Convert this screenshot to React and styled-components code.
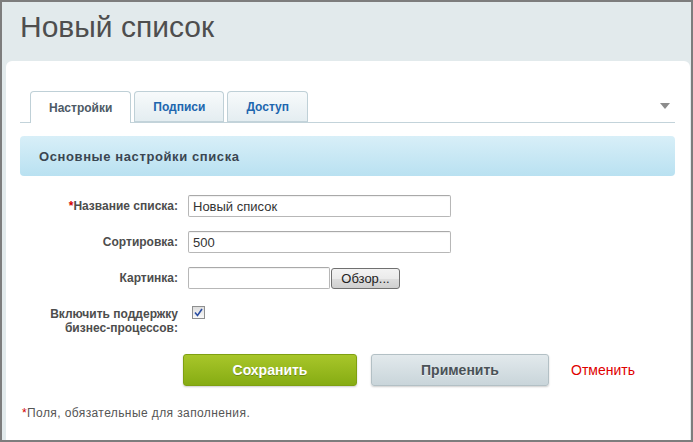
import React from 'react';
import styled, { createGlobalStyle } from 'styled-components';

const GlobalStyle = createGlobalStyle`
    html, body {
        margin: 0;
        padding: 0;
    }
    body {
        font-family: "Liberation Sans", Arial, sans-serif;
    }
`

const Frame = styled.div`
    width: 693px;
    height: 442px;
    box-sizing: border-box;
    border: 2px solid #7d7d7d;
    background: #e2eaec;
    display: flex;
    flex-direction: column;
    overflow: hidden;
`

const TitleBar = styled.div`
    height: 59px;
    padding-left: 18px;
    box-sizing: border-box;
`

const Title = styled.h1`
    margin: 0;
    padding-top: 8px;
    font-size: 30px;
    line-height: 34px;
    font-weight: normal;
    color: #4e4e4e;
`

const Panel = styled.div`
    flex: 1;
    background: #fff;
    margin: 0 1px 0 4px;
    border-radius: 6px 6px 0 0;
    padding: 29px 15px 0 14px;
`

const TabsRow = styled.div`
    display: flex;
    align-items: flex-end;
    gap: 3px;
    padding-left: 10px;
    height: 32px;
    border-bottom: 1px solid #c3d3da;
`

const Tab = styled.div`
    height: ${p => (p.$active ? '32px' : '31px')};
    margin-bottom: ${p => (p.$active ? '-1px' : '0')};
    padding: 0 18px;
    box-sizing: border-box;
    display: flex;
    align-items: center;
    border: 1px solid #bfd0d7;
    border-bottom: ${p => (p.$active ? 'none' : '1px solid #c3d3da')};
    border-radius: 4px 4px 0 0;
    background: ${p => (p.$active ? '#fff' : 'linear-gradient(#f7fafb, #e4edf1)')};
    font-size: 12px;
    font-weight: bold;
    color: ${p => (p.$active ? '#4d5a66' : '#2066ae')};
`

const TabArrow = styled.div`
    margin-left: auto;
    margin-right: 5px;
    align-self: center;
    width: 0;
    height: 0;
    border-left: 5px solid transparent;
    border-right: 5px solid transparent;
    border-top: 6px solid #8c8c8c;
`

const SectionHeader = styled.div`
    margin-top: 13px;
    height: 40px;
    box-sizing: border-box;
    padding-left: 19px;
    display: flex;
    align-items: center;
    border-radius: 4px;
    background: linear-gradient(#d8eff8, #b9e1f1);
    font-size: 13px;
    font-weight: bold;
    color: #3a4651;
    letter-spacing: 0.6px;
`

const Form = styled.div`
    margin-top: 19px;
    display: grid;
    grid-template-columns: 158px 1fr;
    column-gap: 10px;
    row-gap: 14px;
    align-items: center;
`

const Label = styled.div`
    text-align: right;
    font-size: 12px;
    font-weight: bold;
    line-height: 14px;
    color: #4d4d4d;
    align-self: ${p => (p.$top ? 'start' : 'center')};
    padding-top: ${p => (p.$top ? '4px' : '0')};
`

const Req = styled.span`
    color: #d40000;
`

const TextInput = styled.input`
    width: ${p => p.$w || 263}px;
    height: 22px;
    box-sizing: border-box;
    border: 1px solid #b7b7b7;
    border-top-color: #a9a9a9;
    border-radius: 2px;
    padding: 0 4px;
    font-family: "Liberation Sans", Arial, sans-serif;
    font-size: 13px;
    color: #333;
    box-shadow: inset 0 1px 1px rgba(0, 0, 0, 0.06);
    outline: none;
`

const FileRow = styled.div`
    display: flex;
    align-items: center;
    gap: 1px;
`

const BrowseButton = styled.div`
    width: 69px;
    height: 21px;
    box-sizing: border-box;
    display: flex;
    align-items: center;
    justify-content: center;
    border: 1px solid #707070;
    border-radius: 3px;
    background: linear-gradient(#f3f3f3 0%, #ebebeb 50%, #dddddd 51%, #cfcfcf 100%);
    font-size: 13px;
    color: #222;
`

const CheckCell = styled.div`
    align-self: start;
    padding: 3px 0 0 4px;
`

const CheckBox = styled.span`
    display: flex;
    align-items: center;
    justify-content: center;
    width: 13px;
    height: 13px;
    box-sizing: border-box;
    border: 1px solid #8e8f8f;
    background: linear-gradient(#dedede, #f9f9f9);
`

const Actions = styled.div`
    margin: 19px 0 0 163px;
    display: flex;
    align-items: center;
`

const Button = styled.div`
    width: ${p => p.$w}px;
    height: 32px;
    box-sizing: border-box;
    display: flex;
    align-items: center;
    justify-content: center;
    margin-right: ${p => p.$mr || 0}px;
    border-radius: 3px;
    font-size: 14px;
    font-weight: bold;
    border: 1px solid ${p => (p.$green ? '#7fa012' : '#b3c0c5')};
    background: ${p => (p.$green ? 'linear-gradient(#a8c62a, #86ac13)' : 'linear-gradient(#e2e9ec, #c9d5da)')};
    color: ${p => (p.$green ? '#fff' : '#4a5257')};
    text-shadow: ${p => (p.$green ? '0 1px 0 rgba(0,0,0,0.25)' : '0 1px 0 rgba(255,255,255,0.6)')};
    box-shadow: 0 1px 2px rgba(0, 0, 0, 0.2);
`

const CancelLink = styled.span`
    font-size: 14px;
    color: #e00000;
`

const Note = styled.div`
    margin: 20px 0 0 2px;
    font-size: 12px;
    letter-spacing: 0.4px;
    color: #555;
`

function App() {
    return (
        <Frame>
            <GlobalStyle />
            <TitleBar>
                <Title>Новый список</Title>
            </TitleBar>
            <Panel>
                <TabsRow>
                    <Tab $active>Настройки</Tab>
                    <Tab>Подписи</Tab>
                    <Tab>Доступ</Tab>
                    <TabArrow />
                </TabsRow>
                <SectionHeader>Основные настройки списка</SectionHeader>
                <Form>
                    <Label><Req>*</Req>Название списка:</Label>
                    <div><TextInput defaultValue="Новый список" /></div>
                    <Label>Сортировка:</Label>
                    <div><TextInput defaultValue="500" /></div>
                    <Label>Картинка:</Label>
                    <FileRow>
                        <TextInput $w={142} />
                        <BrowseButton>Обзор...</BrowseButton>
                    </FileRow>
                    <Label $top>Включить поддержку<br />бизнес-процессов:</Label>
                    <CheckCell>
                        <CheckBox>
                            <svg width="9" height="9" viewBox="0 0 9 9">
                                <path d="M1 4.5 L3.5 7.5 L8 1" fill="none" stroke="#2b4ea3" strokeWidth="1.6" />
                            </svg>
                        </CheckBox>
                    </CheckCell>
                </Form>
                <Actions>
                    <Button $green $w={174} $mr={14}>Сохранить</Button>
                    <Button $w={178} $mr={22}>Применить</Button>
                    <CancelLink>Отменить</CancelLink>
                </Actions>
                <Note><Req>*</Req>Поля, обязательные для заполнения.</Note>
            </Panel>
        </Frame>
    );
}

export default App;
